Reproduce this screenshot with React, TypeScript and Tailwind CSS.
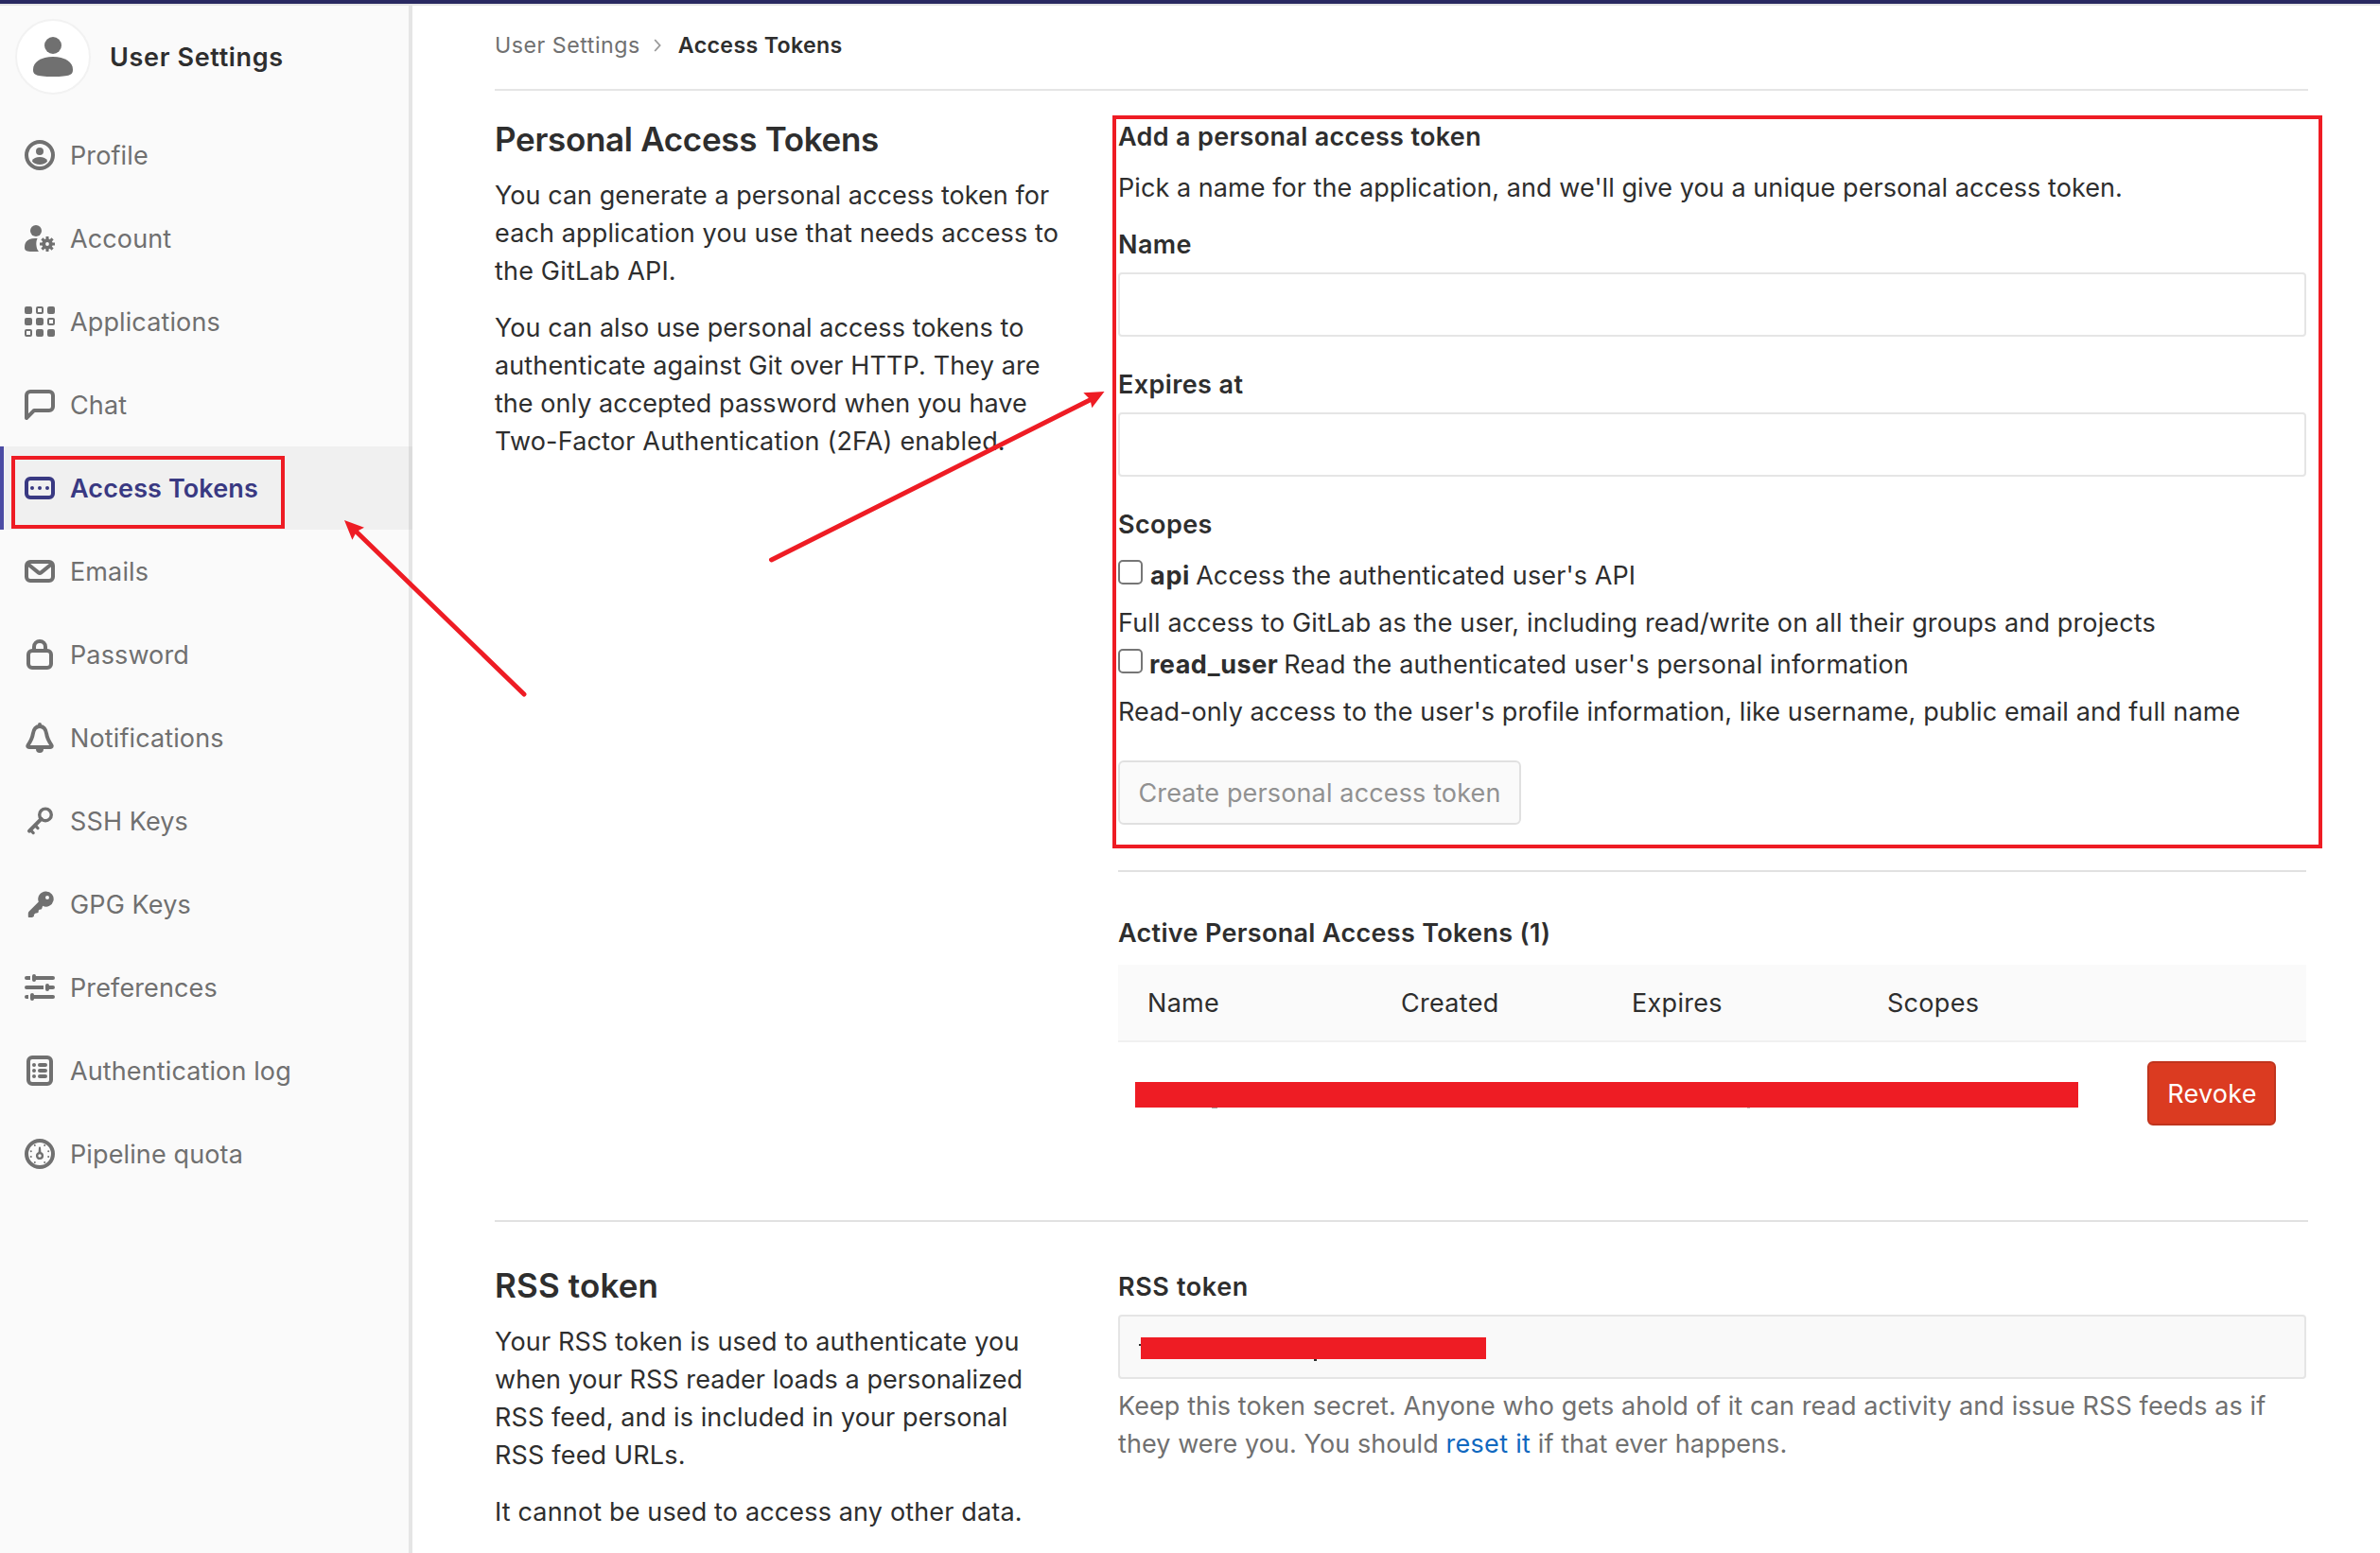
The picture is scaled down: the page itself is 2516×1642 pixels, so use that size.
import type { ReactNode } from "react";

function Icon({ children }: { children: ReactNode }) {
  return (
    <svg viewBox="0 0 16 16" className="size-8 shrink-0" fill="currentColor">
      {children}
    </svg>
  );
}

const stroke = { fill: "none", stroke: "currentColor", strokeWidth: 2 } as const;

const ProfileIcon = () => (
  <Icon>
    <circle cx="8" cy="8" r="7" {...stroke} />
    <circle cx="8" cy="6" r="2" />
    <path d="M3.900 11.100C4.600 9.600 6.100 9 8 9s3.400.6 4.100 2.100C11.300 12.400 9.800 13 8 13s-3.300-.6-4.100-1.900z" />
  </Icon>
);

const AccountIcon = () => (
  <Icon>
    <circle cx="6" cy="4" r="3" />
    <path d="M0 12.700C0 9.700 2 8 5.500 8h1.300C6.200 9.200 6.100 10.300 6.200 11.500 6.300 13 6.700 14 7.500 15H4C1 15 0 14.400 0 12.700z" />
    <circle cx="12" cy="11" r="1.900" fill="none" stroke="currentColor" strokeWidth="1.900" />
    <g stroke="currentColor" strokeWidth="1.500">
      <path d="M12 7v1.800M12 13.200V15M8 11h1.800M14.200 11H16M9.200 8.200l1.300 1.300M13.500 12.500l1.300 1.300M14.800 8.200l-1.300 1.300M10.500 12.500l-1.300 1.300" />
    </g>
  </Icon>
);

const ApplicationsIcon = () => (
  <Icon>
    <rect x="0" y="0" width="4" height="4" rx="1" />
    <rect x="6.500" y=".5" width="3" height="3" rx=".5" {...stroke} strokeWidth={1} />
    <rect x="12" y="0" width="4" height="4" rx="1" />
    <rect x="0" y="6" width="4" height="4" rx="1" />
    <rect x="6" y="6" width="4" height="4" rx="1" />
    <rect x="12.500" y="6.500" width="3" height="3" rx=".5" {...stroke} strokeWidth={1} />
    <rect x=".5" y="12.500" width="3" height="3" rx=".5" {...stroke} strokeWidth={1} />
    <rect x="6" y="12" width="4" height="4" rx="1" />
    <rect x="12" y="12" width="4" height="4" rx="1" />
  </Icon>
);

const ChatIcon = () => (
  <Icon>
    <path
      fillRule="evenodd"
      d="M1.707 15.707C1.077 16.337 0 15.891 0 15V3a3 3 0 0 1 3-3h10a3 3 0 0 1 3 3v6a3 3 0 0 1-3 3H5.414l-3.707 3.707zM2 12.586l2.293-2.293A1 1 0 0 1 5 10h8a1 1 0 0 0 1-1V3a1 1 0 0 0-1-1H3a1 1 0 0 0-1 1v9.586z"
    />
  </Icon>
);

const TokenIcon = () => (
  <Icon>
    <rect x="1" y="3" width="14" height="10" rx="2" {...stroke} />
    <circle cx="4" cy="8" r="1" />
    <circle cx="8" cy="8" r="1" />
    <circle cx="12" cy="8" r="1" />
  </Icon>
);

const MailIcon = () => (
  <Icon>
    <rect x="1" y="3" width="14" height="10" rx="2" {...stroke} />
    <path d="M1.500 4l5.800 4.700a1.100 1.100 0 0 0 1.400 0L14.500 4" {...stroke} />
  </Icon>
);

const LockIcon = () => (
  <Icon>
    <rect x="2" y="6" width="12" height="9" rx="2" {...stroke} />
    <path d="M5 6V4a3 3 0 0 1 6 0v2" {...stroke} />
  </Icon>
);

const BellIcon = () => (
  <Icon>
    <path
      d="M8 2C5.700 2 4.700 4 4.400 6 4.100 8.300 3.300 9.700 1.800 11.900 1.400 12.500 1.700 13 2.400 13h11.200c.7 0 1-.5.600-1.100C12.700 9.700 11.900 8.300 11.600 6 11.300 4 10.300 2 8 2z"
      {...stroke}
    />
    <path d="M6 14h4a2 2 0 0 1-4 0zM7 1a1 1 0 0 1 2 0v1H7z" />
  </Icon>
);

const KeyIcon = () => (
  <Icon>
    <circle cx="11" cy="4.700" r="3.150" {...stroke} strokeWidth={1.700} />
    <path d="M8.800 6.900L2.500 13.300" {...stroke} strokeLinecap="round" />
    <path d="M5.600 10.400L7 11.800M3.200 12.900l1.400 1.400" {...stroke} strokeWidth={1.600} strokeLinecap="round" />
  </Icon>
);

const SolidKeyIcon = () => (
  <Icon>
    <path
      fillRule="evenodd"
      d="M11.300 1.300a4 4 0 1 1-1.700 7.600L9 10.600l-1.500.4-.3 1.500-1.600.4-.7.7.1.800L4 15H2.300c-.3 0-.4-.2-.4-.4v-1.700c0-.4.200-.8.5-1.100l5-5A4 4 0 0 1 11.300 1.300zM12 3.500a1 1 0 1 0 0 2 1 1 0 0 0 0-2z"
    />
  </Icon>
);

const PreferencesIcon = () => (
  <Icon>
    <path d="M1 2h2v2H1a1 1 0 0 1 0-2zM6 2h9a1 1 0 0 1 0 2H6zM1 7h9v2H1a1 1 0 0 1 0-2zM13 7h2a1 1 0 0 1 0 2h-2zM1 12h1v2H1a1 1 0 0 1 0-2zM5 12h10a1 1 0 0 1 0 2H5z" />
    <rect x="4" y="1" width="2" height="4" rx="1" />
    <rect x="11" y="6" width="2" height="4" rx="1" />
    <rect x="3" y="11" width="2" height="4" rx="1" />
  </Icon>
);

const LogIcon = () => (
  <Icon>
    <rect x="2" y="1" width="12" height="14" rx="2" {...stroke} />
    {[5, 8, 11].map((y) => (
      <g key={y}>
        <circle cx="5" cy={y} r="1" />
        <rect x="7" y={y - 1} width="5" height="2" rx="1" />
      </g>
    ))}
  </Icon>
);

const QuotaIcon = () => (
  <Icon>
    <circle cx="8" cy="8" r="7" {...stroke} />
    <circle cx="8" cy="9" r="1.450" {...stroke} strokeWidth={1.200} />
    <path d="M7.200 8l.3-3.300a.5.500 0 0 1 1 0L8.800 8z" />
    {[
      [3.4, 6.6],
      [3.4, 9.5],
      [5.4, 3.5],
      [10.6, 3.5],
      [12.6, 6.6],
      [12.6, 9.5],
      [5.4, 12.5],
      [10.6, 12.5],
    ].map(([x, y]) => (
      <circle key={`${x}-${y}`} cx={x} cy={y} r=".5" />
    ))}
  </Icon>
);

const navItems = [
  { label: "Profile", icon: <ProfileIcon /> },
  { label: "Account", icon: <AccountIcon /> },
  { label: "Applications", icon: <ApplicationsIcon /> },
  { label: "Chat", icon: <ChatIcon /> },
  { label: "Access Tokens", icon: <TokenIcon />, active: true },
  { label: "Emails", icon: <MailIcon /> },
  { label: "Password", icon: <LockIcon /> },
  { label: "Notifications", icon: <BellIcon /> },
  { label: "SSH Keys", icon: <KeyIcon /> },
  { label: "GPG Keys", icon: <SolidKeyIcon /> },
  { label: "Preferences", icon: <PreferencesIcon /> },
  { label: "Authentication log", icon: <LogIcon /> },
  { label: "Pipeline quota", icon: <QuotaIcon /> },
];

function Sidebar() {
  return (
    <aside className="w-[436px] shrink-0 border-r-4 border-[#e5e5e5] bg-[#fafafa]">
      <div className="mt-[14px] flex h-20 items-center pl-4">
        <div className="flex size-20 items-center justify-center rounded-full border-2 border-[#f2f2f2] bg-white text-[#707070]">
          <svg viewBox="0 0 42 42" className="size-[42px]" fill="currentColor">
            <circle cx="21" cy="9" r="9" />
            <path d="M0 34.500C0 26.500 8.500 21 21 21s21 5.500 21 13.500c0 5.500-2.500 7.500-21 7.500S0 40 0 34.500z" />
          </svg>
        </div>
        <span className="ml-5 pt-0.5 font-semibold tracking-[0.66px]">User Settings</span>
      </div>
      <nav className="mt-5">
        {navItems.map((item) => (
          <a
            key={item.label}
            className={
              item.active
                ? "-mr-1 flex h-[88px] items-center border-l-4 border-[#4b4ba3] bg-black/[0.04] pl-[22px] font-semibold text-[#393982]"
                : "flex h-[88px] items-center pl-[26px] text-[#707070]"
            }
          >
            {item.icon}
            <span className="ml-4 pt-0.5 tracking-[0.12px]">{item.label}</span>
          </a>
        ))}
      </nav>
    </aside>
  );
}

function Redaction({ className }: { className: string }) {
  return <div className={`bg-[#ee1c24] ${className}`} />;
}

function TokenForm() {
  return (
    <form>
      <h5 className="font-semibold tracking-[0.33px]">Add a personal access token</h5>
      <p className="mt-[14px] tracking-[0.062px]">
        Pick a name for the application, and we'll give you a unique personal access token.
      </p>
      <label className="mt-5 block font-semibold tracking-[0.4px]">Name</label>
      <div className="mt-[9px] h-[68px] rounded-[4px] border-2 border-[#e5e5e5] bg-white" />
      <label className="mt-[31px] block font-semibold tracking-[0.4px]">Expires at</label>
      <div className="mt-[9px] h-[68px] rounded-[4px] border-2 border-[#e5e5e5] bg-white" />
      <label className="mt-[31px] block font-semibold tracking-[0.4px]">Scopes</label>
      <div className="mt-[14px] flex">
        <span className="mt-[3px] size-[26px] rounded-[5px] border-2 border-[#767676] bg-white" />
        <span className="ml-2 font-bold tracking-[0.7px]">api</span>
        <span className="ml-[6px] tracking-[0.12px]">Access the authenticated user's API</span>
      </div>
      <p className="mt-[10px] tracking-[0.145px]">
        Full access to GitLab as the user, including read/write on all their groups and projects
      </p>
      <div className="mt-1 flex">
        <span className="mt-[3px] size-[26px] rounded-[5px] border-2 border-[#767676] bg-white" />
        <span className="ml-[7px] font-bold tracking-[0.5px]">read_user</span>
        <span className="ml-[6px] tracking-[0.18px]">
          Read the authenticated user's personal information
        </span>
      </div>
      <p className="mt-[10px] tracking-[0.09px]">
        Read-only access to the user's profile information, like username, public email and full name
      </p>
      <button
        type="button"
        className="mt-[31px] flex h-[68px] w-[426px] items-center justify-center rounded-[6px] border-2 border-[#e0e0e0] bg-[#fafafa] text-[#919191]"
      >
        <span className="pt-0.5 tracking-[0.14px]">Create personal access token</span>
      </button>
    </form>
  );
}

function ActiveTokens() {
  return (
    <>
      <h5 className="mt-[45px] font-semibold tracking-[0.32px]">Active Personal Access Tokens (1)</h5>
      <div className="mt-[13px] grid h-[82px] grid-cols-[268px_244px_270px_1fr] items-center border-b-2 border-[#f0f0f0] bg-[#fafafa] pt-0.5 pl-[31px] tracking-[0.3px]">
        <span>Name</span>
        <span>Created</span>
        <span>Expires</span>
        <span>Scopes</span>
      </div>
      <div className="flex pt-5">
        <div className="relative mt-[22px] ml-[18px] h-[27px] w-[997px]">
          <span className="absolute top-[27px] left-[81px] h-px w-[6px] bg-[#a0a0a0]" />
          <span className="absolute top-[27px] left-[647px] h-px w-[3px] bg-[#c0c0c0]" />
          <Redaction className="h-full w-full" />
        </div>
        <button
          type="button"
          className="ml-[73px] flex h-[68px] w-[136px] items-center justify-center rounded-[6px] border-2 border-[#c0341d] bg-[#db3b21] text-white"
        >
          <span className="pt-0.5 pl-px tracking-[0.25px]">Revoke</span>
        </button>
      </div>
    </>
  );
}

export default function App() {
  return (
    <div className="relative flex h-[1642px] w-[2516px] flex-col overflow-hidden bg-white font-['Inter',sans-serif] text-[27px] leading-[40px] whitespace-nowrap text-[#2e2e2e]">
      <header className="h-[6px] shrink-0 border-b-2 border-[#e5e5e5] bg-[#292961]" />
      <div className="flex min-h-0 flex-1">
        <Sidebar />
        <main className="ml-[87px] w-[1917px]">
          <div className="flex h-[90px] items-start border-b-2 border-[#e5e5e5] pt-[22px] text-[23.2px]">
            <span className="tracking-[0.52px] text-[#707070]">User Settings</span>
            <svg viewBox="0 0 8 14" className="mt-[13px] ml-[14px] h-[14px] w-2">
              <path d="M1.200 1l5.400 6-5.400 6" fill="none" stroke="#999" strokeWidth="1.800" />
            </svg>
            <span className="ml-[18px] font-semibold tracking-[0.33px]">Access Tokens</span>
          </div>

          <section className="flex h-[1196px] border-b-2 border-[#e1e1e1] pt-[29px]">
            <div className="w-[659px] shrink-0">
              <h4 className="text-[35px] leading-[44px] font-semibold tracking-[-0.31px]">
                Personal Access Tokens
              </h4>
              <p className="mt-[18px]">
                <span className="block tracking-[0.045px]">You can generate a personal access token for</span>
                <span className="block tracking-[0.13px]">each application you use that needs access to</span>
                <span className="block tracking-[0.18px]">the GitLab API.</span>
              </p>
              <p className="mt-5">
                <span className="block tracking-[0.06px]">You can also use personal access tokens to</span>
                <span className="block tracking-[0.12px]">authenticate against Git over HTTP. They are</span>
                <span className="block tracking-[0.034px]">the only accepted password when you have</span>
                <span className="block tracking-[0.18px]">Two-Factor Authentication (2FA) enabled.</span>
              </p>
            </div>
            <div className="w-[1256px]">
              <TokenForm />
              <hr className="mt-12 border-t-2 border-[#e1e1e1]" />
              <ActiveTokens />
            </div>
          </section>

          <section className="flex">
            <div className="w-[659px] shrink-0 pt-[45px]">
              <h4 className="text-[35px] leading-[44px] font-semibold tracking-[0.16px]">RSS token</h4>
              <p className="mt-[18px]">
                <span className="block tracking-[0.17px]">Your RSS token is used to authenticate you</span>
                <span className="block tracking-[0.06px]">when your RSS reader loads a personalized</span>
                <span className="block tracking-[0.11px]">RSS feed, and is included in your personal</span>
                <span className="block tracking-[0.18px]">RSS feed URLs.</span>
              </p>
              <p className="mt-5 tracking-[0.15px]">It cannot be used to access any other data.</p>
            </div>
            <div className="w-[1256px] pt-[49px]">
              <label className="block font-semibold tracking-[0.6px]">RSS token</label>
              <div className="mt-[9px] h-[68px] rounded-[4px] border-2 border-[#e5e5e5] bg-[#f9f9f9] pt-[22px] pl-[22px]">
                <div className="relative h-[23px] w-[365px]">
                  <span className="absolute top-[7px] -left-0.5 h-0.5 w-0.5 bg-[#2e2e2e]" />
                  <span className="absolute top-[23px] left-[183px] h-0.5 w-[3px] bg-[#2e2e2e]" />
                  <Redaction className="h-full w-full" />
                </div>
              </div>
              <p className="mt-[9px] text-[#707070]">
                <span className="block tracking-[0.1px]">
                  Keep this token secret. Anyone who gets ahold of it can read activity and issue RSS feeds as if
                </span>
                <span className="block tracking-[0.08px]">
                  they were you. You should <a className="tracking-[0.3px] text-[#1068bf]">reset it</a> if that
                  ever happens.
                </span>
              </p>
            </div>
          </section>
        </main>
      </div>

      {/* Annotations drawn over the page */}
      <div className="absolute top-[482px] left-3 h-[77px] w-[289px] border-4 border-[#ee1c24]" />
      <div className="absolute top-[122px] left-[1176px] h-[775px] w-[1279px] border-4 border-[#ee1c24]" />
      <svg
        viewBox="0 0 2516 1642"
        className="pointer-events-none absolute inset-0 h-[1642px] w-[2516px]"
        fill="#ee1c24"
        stroke="#ee1c24"
      >
        <path d="M376 561.500L554 734" strokeWidth="5" strokeLinecap="round" />
        <path d="M364 550l21 7.800-8 4.200-4.600 8.800z" stroke="none" />
        <path d="M1154 422L815.500 592" strokeWidth="5" strokeLinecap="round" />
        <path d="M1167.500 414l-22.200 1.200 7.200 7.300 1.800 8.700z" stroke="none" />
      </svg>
    </div>
  );
}
